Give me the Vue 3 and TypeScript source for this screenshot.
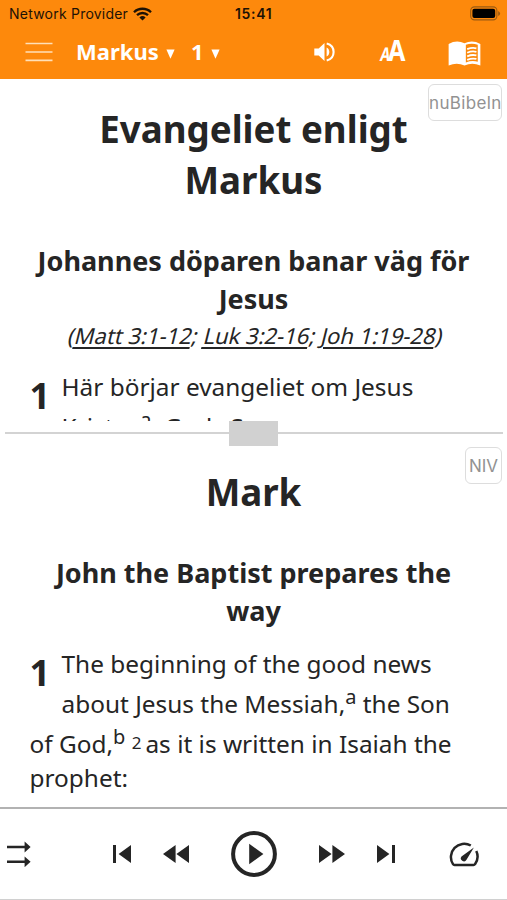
<script setup lang="ts">
interface Reference {
  label: string
  after: string
}

const references: Reference[] = [
  { label: 'Matt 3:1-12', after: '; ' },
  { label: 'Luk 3:2-16', after: '; ' },
  { label: 'Joh 1:19-28', after: '' },
]
</script>

<template>
  <div class="app">
    <header class="top">
      <div class="status">
        <span class="carrier">Network Provider</span>
        <svg class="wifi" viewBox="0 0 19 14" width="19" height="14">
          <path d="M1 5.2a12.2 12.2 0 0 1 17 0M4 8.2a8 8 0 0 1 11 0" fill="none" stroke="#1d1205" stroke-width="2.3" />
          <path d="M6.4 10.4a4.6 4.6 0 0 1 6.2 0L9.5 13.6z" fill="#1d1205" />
        </svg>
        <span class="clock">15:41</span>
        <svg class="battery" viewBox="0 0 31 15" width="31" height="15">
          <rect x=".7" y=".9" width="26.2" height="13" rx="3.8" fill="none" stroke="#9b5b12" stroke-width="1.1" />
          <rect x="2.4" y="2.7" width="22.8" height="9.4" rx="2" fill="#000" />
          <path d="M28.2 5v5q1.9-1 1.9-2.5T28.2 5z" fill="#9b5b12" />
        </svg>
      </div>
      <nav class="bar">
        <svg class="menu" viewBox="0 0 28 20" width="28" height="20">
          <path d="M.5 1.5h27M.5 10h27M.5 18.3h27" stroke="#ffe0b8" stroke-width="1.7" />
        </svg>
        <span class="book">Markus</span>
        <svg class="caret" viewBox="0 0 9 10" width="9" height="10"><path d="M.4.5h8.2L4.5 9.7z" fill="#fff" /></svg>
        <span class="chapter">1</span>
        <svg class="caret" viewBox="0 0 9 10" width="9" height="10"><path d="M.4.5h8.2L4.5 9.7z" fill="#fff" /></svg>
        <svg class="sound" viewBox="0 0 21 20" width="21" height="20">
          <path d="M.3 6.5h4.4L10.5 1v18l-5.8-5.5H.3z" fill="#fff" />
          <path d="M12.6 5.5c3.6 1.6 3.6 7.4 0 9z" fill="#fff" />
          <path d="M12.7 1.5c9.2 2.3 9.2 14.7 0 17" fill="none" stroke="#fff" stroke-width="2.1" />
        </svg>
        <span class="textsize"><span class="small-a">A</span><span class="big-a">A</span></span>
        <svg class="reader" viewBox="0 0 34 26" width="33" height="25">
          <path d="M.5 3Q9-1.7 17 2.4 25-1.7 33.5 3v22.4Q25 22 17 25.4 9 22 .5 25.4z" fill="#fff" />
          <path d="M18.4 4Q24.5 1.5 30.8 4v17.6q-6.3-1.7-12.4.8z" fill="#fb890b" />
          <path d="M19.8 8.5q5-2.1 9.6-.9M19.8 12.2q5-2.1 9.6-.9M19.8 15.9q5-2.1 9.6-.9M19.8 19.6q5-2.1 9.6-.9" fill="none" stroke="#fff" stroke-width="1.9" />
        </svg>
      </nav>
    </header>

    <section class="pane upper">
      <button class="version">nuBibeln</button>
      <h1>Evangeliet enligt<br />Markus</h1>
      <h2>Johannes döparen banar väg för<br />Jesus</h2>
      <p class="refs"><span class="slant">(<template v-for="item in references" :key="item.label"><a>{{ item.label }}</a>{{ item.after }}</template>)</span></p>
      <div class="passage">
        <b class="verse">1</b>
        <span class="line indent">Här börjar evangeliet om Jesus</span>
        <span class="line indent">Kristus<sup>a</sup>, Guds Son.</span>
      </div>
    </section>

    <div class="divider"><i class="handle"></i></div>

    <section class="pane lower">
      <button class="version">NIV</button>
      <h1>Mark</h1>
      <h2>John the Baptist prepares the<br />way</h2>
      <div class="passage">
        <b class="verse">1</b>
        <span class="line indent">The beginning of the good news</span>
        <span class="line indent">about Jesus the Messiah,<sup>a</sup> the Son</span>
        <span class="line">of God,<sup>b</sup> <small>2</small>as it is written in Isaiah the</span>
        <span class="line last">prophet:</span>
      </div>
    </section>

    <footer class="player">
      <svg class="order" viewBox="0 0 24 26" width="24" height="26">
        <path d="M0 6h19M0 20.8h19" stroke="#252525" stroke-width="2.4" />
        <path d="M17.6.6 23.6 6l-6 5.4zM17.6 15.4l6 5.4-6 5.4z" fill="#252525" />
      </svg>
      <svg class="prev" viewBox="0 0 18 18" width="18" height="18">
        <path d="M0 0h3v18H0zM18 0v18L5.6 9z" fill="#252525" />
      </svg>
      <svg class="rewind" viewBox="0 0 26 18" width="26" height="18">
        <path d="M12.6 0v18L0 9zM26 0v18L13.4 9z" fill="#252525" />
      </svg>
      <svg class="play" viewBox="0 0 46 46" width="46" height="46">
        <circle cx="23" cy="23" r="20.9" fill="none" stroke="#252525" stroke-width="4" />
        <path d="M18.2 12.8v20.4L32.4 23z" fill="#252525" />
      </svg>
      <svg class="forward" viewBox="0 0 26 18" width="26" height="18">
        <path d="M0 0v18l12.6-9zM13.4 0v18L26 9z" fill="#252525" />
      </svg>
      <svg class="next" viewBox="0 0 18 18" width="18" height="18">
        <path d="M15 0h3v18h-3zM0 0v18l12.4-9z" fill="#252525" />
      </svg>
      <svg class="speed" viewBox="0 0 30 25" width="30" height="25">
        <path d="M21.8 3.5A13.3 13.3 0 0 0 4 22.2Q4.5 23 5.5 23h19q1 0 1.500-.8a13.300 13.300 0 0 0 1.300-13.200" fill="none" stroke="#252525" stroke-width="2.5" />
        <path d="M24.9 5.4 12.5 14.5a3 3 0 1 0 5 3.3z" fill="#252525" />
      </svg>
    </footer>
  </div>
</template>

<style>
body {
  margin: 0;
  background: #fff;
}
</style>

<style scoped>
.app {
  width: 507px;
  height: 900px;
  overflow: hidden;
  display: flex;
  flex-direction: column;
  background: #fff;
  color: #252525;
  font-family: 'Noto Sans', sans-serif;
}
svg {
  display: block;
  flex: none;
}
.top {
  height: 79px;
  flex: none;
  background: #fd890c;
}
.status {
  height: 27px;
  display: flex;
  align-items: center;
  color: #1d1205;
  font: 14px/27px Inter, sans-serif;
}
.carrier {
  width: 119px;
  margin-left: 9px;
  letter-spacing: 0.22px;
  white-space: nowrap;
}
.wifi {
  margin-left: 5px;
}
.clock {
  width: 39px;
  margin-left: 83px;
  font-weight: 600;
  letter-spacing: 0.7px;
  white-space: nowrap;
}
.battery {
  margin-left: 196px;
}
.bar {
  height: 50px;
  display: flex;
  align-items: center;
  color: #fff;
  font-size: 22px;
  font-weight: 700;
  line-height: 48px;
}
.menu {
  margin-left: 25px;
}
.book,
.chapter {
  height: 50px;
}
.book {
  width: 84px;
  margin-left: 23px;
  white-space: nowrap;
}
.caret {
  margin: 3px 0 0 6px;
}
.chapter {
  width: 13px;
  margin-left: 16px;
}
.bar .chapter + .caret {
  margin-left: 7px;
}
.sound {
  margin-left: 94px;
}
.textsize {
  width: 28px;
  margin-left: 44px;
  display: flex;
  align-items: baseline;
  white-space: nowrap;
}
.small-a {
  width: 9px;
  font-size: 19px;
  transform: skewX(-9deg) scaleX(0.75);
  transform-origin: 0 70%;
}
.big-a {
  font-size: 28px;
  transform: scaleX(0.9);
  transform-origin: 0 50%;
}
.reader {
  margin-left: 41px;
  margin-top: 3px;
}
.pane {
  position: relative;
  flex: none;
  box-sizing: border-box;
  overflow: hidden;
}
.upper {
  height: 342px;
  padding-top: 25px;
}
.lower {
  height: 361px;
  padding-top: 21px;
}
.version {
  position: absolute;
  top: 5px;
  right: 5px;
  box-sizing: border-box;
  height: 37px;
  padding: 0;
  border: 1.5px solid #ddd;
  border-radius: 6px;
  background: #fff;
  color: #929292;
  font: 17px/34px Inter, sans-serif;
  text-align: center;
  white-space: nowrap;
}
.upper .version {
  width: 74px;
  letter-spacing: 0.35px;
}
.lower .version {
  width: 37px;
  top: 1px;
}
h1,
h2,
p {
  margin: 0;
  text-align: center;
  white-space: nowrap;
}
h1 {
  font-size: 36.7px;
  line-height: 51px;
}
h2 {
  margin-top: 36px;
  font-size: 27px;
  line-height: 38px;
}
.refs {
  margin-top: 0;
  padding-left: 5px;
  font-size: 22px;
  line-height: 34px;
}
.slant {
  display: inline-block;
  transform: skewX(-14deg);
}
.refs a {
  text-decoration: underline;
  text-decoration-thickness: 1.5px;
  text-underline-offset: 3px;
}
.passage {
  display: grid;
  grid-template-columns: 32px 1fr;
  margin: 14px 0 0 29.5px;
  font-size: 24.4px;
  line-height: 40px;
}
.upper .passage {
  margin-top: 15px;
}
.verse {
  grid-row: 1 / 3;
  font-size: 36px;
  line-height: 58px;
}
.line {
  grid-column: 1 / 3;
  white-space: nowrap;
}
.line.indent {
  grid-column: 2;
}
.last {
  line-height: 27px;
}
sup {
  font-size: 20px;
  line-height: 0;
  vertical-align: 9px;
}
small {
  font-size: 17px;
  line-height: 0;
  margin-right: 4px;
  vertical-align: 4px;
}
.divider {
  height: 25px;
  flex: none;
  display: grid;
  place-items: center;
  background: linear-gradient(#d3d3d3, #d3d3d3) 5px 11px / 498px 2px no-repeat;
}
.handle {
  width: 49px;
  height: 25px;
  background: #d1d1d1;
}
.player {
  box-sizing: border-box;
  height: 93px;
  flex: none;
  display: flex;
  align-items: center;
  border-top: 2px solid #b2b2b2;
  border-bottom: 1px solid #d0d0d0;
}
.order {
  margin-left: 7px;
}
.prev {
  margin-left: 82px;
}
.rewind {
  margin-left: 32px;
}
.play {
  margin-left: 42px;
}
.forward {
  margin-left: 42px;
}
.next {
  margin-left: 32px;
}
.speed {
  margin-left: 54px;
}
</style>
